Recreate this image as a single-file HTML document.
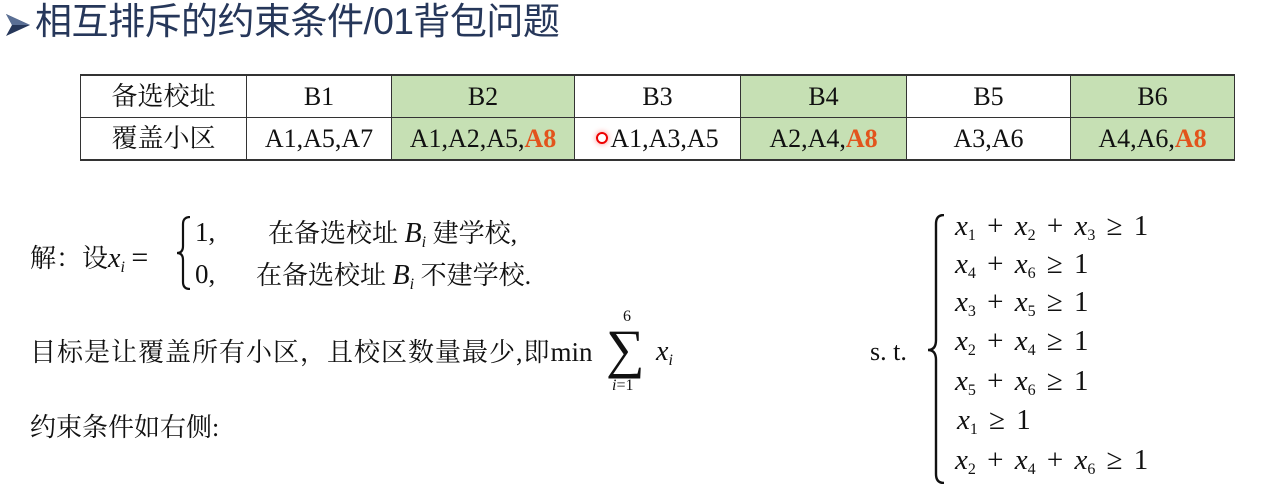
<!DOCTYPE html>
<html><head><meta charset="utf-8"><style>
body{margin:0;width:1270px;height:504px;background:#fff;position:relative;overflow:hidden;font-family:"Liberation Serif","Noto Serif CJK SC",serif;color:#111}
.a{position:absolute;white-space:nowrap;line-height:1}
.t{font-family:"Liberation Sans","Noto Sans CJK SC",sans-serif;color:#26375a;font-size:37px}
table{position:absolute;left:80px;top:74px;border-collapse:collapse;font-size:26px}
td{border:1.5px solid #333;height:41px;text-align:center;padding:0;line-height:1}
table{border-top:2.5px solid #333;border-bottom:2.5px solid #333}
.g{background:#c6e0b4}
.o{color:#e2541c;font-weight:bold}
.m{font-size:26px}
i{font-family:"Liberation Serif",serif}
sub{font-size:16px;vertical-align:-5px;line-height:0}
.c{font-size:29px;font-family:"Liberation Serif",serif;word-spacing:4px}
</style></head><body>
<svg class="a" style="left:5px;top:12px" width="26" height="26" viewBox="0 0 26 26"><path d="M1 2 L25 13 L1 24 L7 13 Z" fill="#26375a"/><path d="M1 2 L25 13 L7 13Z" fill="#5a6f95"/></svg>
<div class="a t" style="left:35px;top:3px;letter-spacing:-0.5px">相互排斥的约束条件/01背包问题</div>
<table>
<tr><td style="width:165px">备选校址</td><td style="width:144px">B1</td><td class="g" style="width:182px">B2</td><td style="width:165px">B3</td><td class="g" style="width:165px">B4</td><td style="width:163px">B5</td><td class="g" style="width:163px">B6</td></tr>
<tr><td>覆盖小区</td><td>A1,A5,A7</td><td class="g">A1,A2,A5,<span class="o">A8</span></td><td><span style="display:inline-block;width:8px;height:8px;border:2px solid #e00;border-radius:50%;box-shadow:0 0 6px #f88;margin-right:2px;vertical-align:3px"></span>A1,A3,A5</td><td class="g">A2,A4,<span class="o">A8</span></td><td>A3,A6</td><td class="g">A4,A6,<span class="o">A8</span></td></tr>
</table>
<div class="a m" style="left:30px;top:243px">解：设<i style="font-size:28px">x</i><sub><i>i</i></sub> <span style="font-size:30px">=</span></div>
<svg class="a" style="left:176px;top:216px" width="16" height="74" viewBox="0 0 16 74"><path d="M14 1 Q7 1 7 8 L7 30 Q7 37 1 37 Q7 37 7 44 L7 66 Q7 73 14 73" fill="none" stroke="#111" stroke-width="2.2"/></svg>
<div class="a m" style="left:195px;top:219px;font-size:27px">1,</div>
<div class="a m" style="left:268px;top:220px">在备选校址 <i style="font-size:28px">B</i><sub><i>i</i></sub> 建学校,</div>
<div class="a m" style="left:195px;top:261px;font-size:27px">0,</div>
<div class="a m" style="left:256px;top:262px">在备选校址 <i style="font-size:28px">B</i><sub><i>i</i></sub> 不建学校.</div>
<div class="a m" style="left:30px;top:339px;letter-spacing:1px">目标是让覆盖所有小区，且校区数量最少,即<span style="font-size:27px;letter-spacing:0">min</span></div>
<div class="a" style="left:623px;top:309px;font-size:16px">6</div>
<div class="a" style="left:606px;top:322px;font-size:54px">∑</div>
<div class="a" style="left:612px;top:378px;font-size:16px"><i>i</i>=1</div>
<div class="a m" style="left:656px;top:338px"><i style="font-size:28px">x</i><sub><i>i</i></sub></div>
<div class="a m" style="left:30px;top:415px">约束条件如右侧:</div>
<div class="a m" style="left:870px;top:339px;font-size:26px">s. t.</div>
<svg class="a" style="left:926px;top:214px" width="20" height="270" viewBox="0 0 20 270"><path d="M18 1 Q10 1 10 10 L10 126 Q10 136 2 136 Q10 136 10 146 L10 260 Q10 269 18 269" fill="none" stroke="#111" stroke-width="2.4"/></svg>
<div class="a c" style="left:955px;top:212px"><i>x</i><sub>1</sub> + <i>x</i><sub>2</sub> + <i>x</i><sub>3</sub> ≥ 1</div>
<div class="a c" style="left:955px;top:250px"><i>x</i><sub>4</sub> + <i>x</i><sub>6</sub> ≥ 1</div>
<div class="a c" style="left:955px;top:288px"><i>x</i><sub>3</sub> + <i>x</i><sub>5</sub> ≥ 1</div>
<div class="a c" style="left:955px;top:327px"><i>x</i><sub>2</sub> + <i>x</i><sub>4</sub> ≥ 1</div>
<div class="a c" style="left:955px;top:367px"><i>x</i><sub>5</sub> + <i>x</i><sub>6</sub> ≥ 1</div>
<div class="a c" style="left:957px;top:406px"><i>x</i><sub>1</sub> ≥ 1</div>
<div class="a c" style="left:955px;top:446px"><i>x</i><sub>2</sub> + <i>x</i><sub>4</sub> + <i>x</i><sub>6</sub> ≥ 1</div>
</body></html>
